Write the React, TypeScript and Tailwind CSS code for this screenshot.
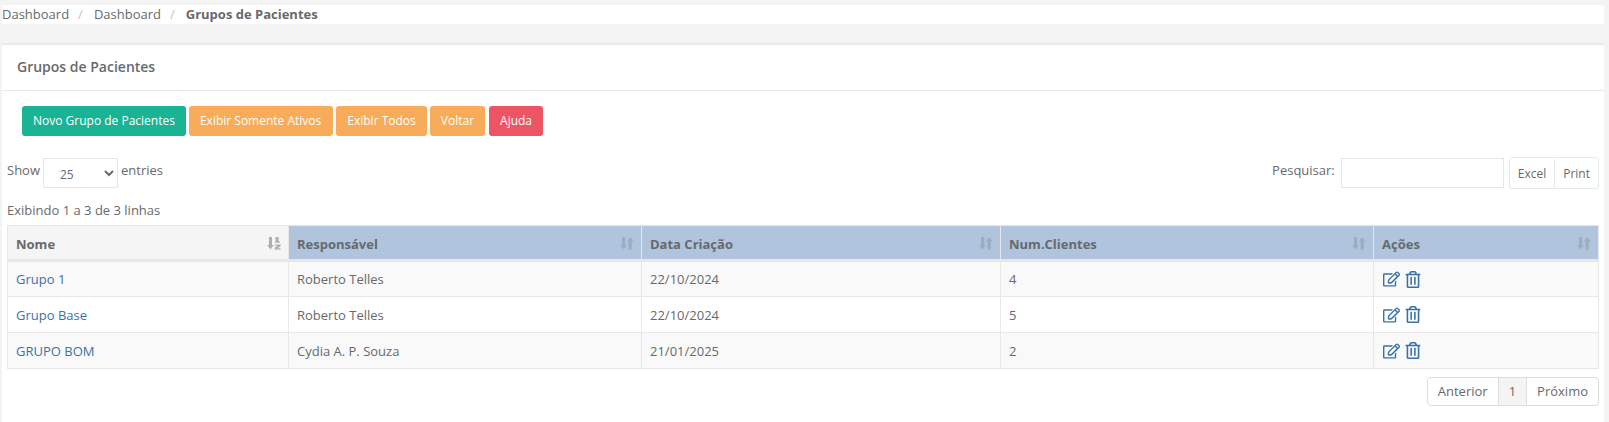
import { FaRegEdit, FaRegTrashAlt } from "react-icons/fa";

const rows = [
  { nome: "Grupo 1", responsavel: "Roberto Telles", data: "22/10/2024", clientes: "4", striped: true },
  { nome: "Grupo Base", responsavel: "Roberto Telles", data: "22/10/2024", clientes: "5", striped: false },
  { nome: "GRUPO BOM", responsavel: "Cydia A. P. Souza", data: "21/01/2025", clientes: "2", striped: true },
];

const SortIcon = () => (
  <svg viewBox="0 0 14 14" className="w-[14px] h-[14px] -mr-[1px] fill-[#676a6c] opacity-25">
    <path d="M2 1h3.2v8h1.8L3.6 13.5 0.2 9H2z" />
    <path d="M11.8 13.5H8.6v-8H6.8L10.2 1l3.4 4.5h-1.8z" />
  </svg>
);

const SortedIcon = () => (
  <svg viewBox="0 0 14 14" className="w-[14px] h-[14px] -mr-[1px] fill-[#676a6c] opacity-50">
    <path d="M2 1h3v8h1.8L3.5 13.5 0.2 9H2z" />
    <path d="M8.6 1h3v4.5H13v1.2H8V5.5h.6z" />
    <path d="M7.6 8.5h6v1.7l-3 2h3v1.3h-6v-1.7l3-2h-3z" />
  </svg>
);

const Header = ({ label }: { label: string }) => (
  <th className="border border-[#e7e7e7] border-b-[3px] bg-[#b0c4de] px-2 h-[35px] text-left font-bold">
    <div className="flex items-center justify-between">
      <span className="mt-[5px]">{label}</span>
      <SortIcon />
    </div>
  </th>
);

export default function App() {
  return (
    <div className="min-h-[422px] flex flex-col bg-[#f3f3f4] pt-[5px] pl-[2px] pr-[5px] text-[13px] text-[#676a6c] font-['Open_Sans',sans-serif] overflow-hidden">
      <div className="bg-white h-[19px] flex items-center leading-none">
        <span>Dashboard</span>
        <span className="ml-[9px] mr-[11px] text-[#c4c4c4]">/</span>
        <span>Dashboard</span>
        <span className="ml-[9px] mr-[11px] text-[#c4c4c4]">/</span>
        <strong className="font-bold">Grupos de Pacientes</strong>
      </div>

      <div className="mt-[19px] flex-1 bg-white border-t-2 border-[#e7eaec]">
        <div className="h-[46px] border-b border-[#e7eaec] pl-[15px] pb-[2px] flex items-center">
          <h5 className="text-[14px] font-semibold">Grupos de Pacientes</h5>
        </div>

        <div className="px-[5px] pt-[15px]">
          <div className="flex pl-[15px] text-white text-[12px]">
            <button className="h-[30px] px-[11px] rounded-[3px] bg-[#1ab394]">Novo Grupo de Pacientes</button>
            <button className="ml-[3px] h-[30px] px-[11px] pr-[12px] rounded-[3px] bg-[#f8ac59]">Exibir Somente Ativos</button>
            <button className="ml-[3px] h-[30px] px-[11px] rounded-[3px] bg-[#f8ac59]">Exibir Todos</button>
            <button className="ml-[3px] h-[30px] px-[11px] rounded-[3px] bg-[#f8ac59]">Voltar</button>
            <button className="ml-[4px] h-[30px] px-[11px] rounded-[3px] bg-[#ed5565]">Ajuda</button>
          </div>

          <div className="mt-[21px] flex items-center justify-between">
            <div className="flex items-center gap-[3px]">
              <span className="pb-[4px]">Show</span>
              <select className="w-[75px] h-[30px] border border-[#e5e6e7] bg-white pl-[12px] pt-[3px] text-[12px]" defaultValue="25">
                <option>25</option>
              </select>
              <span className="pb-[4px]">entries</span>
            </div>
            <div className="flex items-center">
              <span className="pb-[4px]">Pesquisar:</span>
              <input className="ml-[6px] w-[163px] h-[30px] border border-[#e5e6e7] bg-white" />
              <div className="ml-[5px] pt-[1px] flex h-[32px] border border-[#e7eaec] rounded-[3px] text-[12px]">
                <span className="px-[8px] flex items-center border-r border-[#e7eaec]">Excel</span>
                <span className="px-[8px] flex items-center">Print</span>
              </div>
            </div>
          </div>

          <p className="mt-[12px] h-[18px] leading-[18px]">Exibindo 1 a 3 de 3 linhas</p>

          <table className="mt-[6px] w-[1591px] table-fixed border-collapse">
            <colgroup>
              <col className="w-[281px]" />
              <col className="w-[353px]" />
              <col className="w-[359px]" />
              <col className="w-[373px]" />
              <col className="w-[225px]" />
            </colgroup>
            <thead>
              <tr>
                <th className="border border-[#e7e7e7] border-b-[3px] bg-[#f5f5f6] px-2 h-[35px] text-left font-bold">
                  <div className="flex items-center justify-between">
                    <span className="mt-[5px]">Nome</span>
                    <SortedIcon />
                  </div>
                </th>
                <Header label="Responsável" />
                <Header label="Data Criação" />
                <Header label="Num.Clientes" />
                <Header label="Ações" />
              </tr>
            </thead>
            <tbody>
              {rows.map((row) => (
                <tr key={row.nome} className={row.striped ? "bg-[#f9f9f9]" : "bg-white"}>
                  <td className="border border-[#e7e7e7] px-2 pt-[2px] h-[36px]">
                    <a className="text-[#3a72a8]">{row.nome}</a>
                  </td>
                  <td className="border border-[#e7e7e7] px-2 pt-[2px]">{row.responsavel}</td>
                  <td className="border border-[#e7e7e7] px-2 pt-[2px]">{row.data}</td>
                  <td className="border border-[#e7e7e7] px-2 pt-[2px]">{row.clientes}</td>
                  <td className="border border-[#e7e7e7] px-2">
                    <div className="flex items-center gap-[5px] pl-[1px] text-[#3a72a8]">
                      <FaRegEdit className="w-[17px] h-[16px]" />
                      <FaRegTrashAlt className="w-[16px] h-[17px]" />
                    </div>
                  </td>
                </tr>
              ))}
            </tbody>
          </table>

          <div className="mt-[8px] flex justify-end">
            <div className="flex h-[29px] border border-[#dddddd] rounded-[4px]">
              <span className="px-[10px] flex items-center">Anterior</span>
              <span className="px-[10px] flex items-center border-x border-[#dddddd] bg-[#f4f4f4]">1</span>
              <span className="px-[10px] flex items-center">Próximo</span>
            </div>
          </div>
        </div>
      </div>
    </div>
  );
}
